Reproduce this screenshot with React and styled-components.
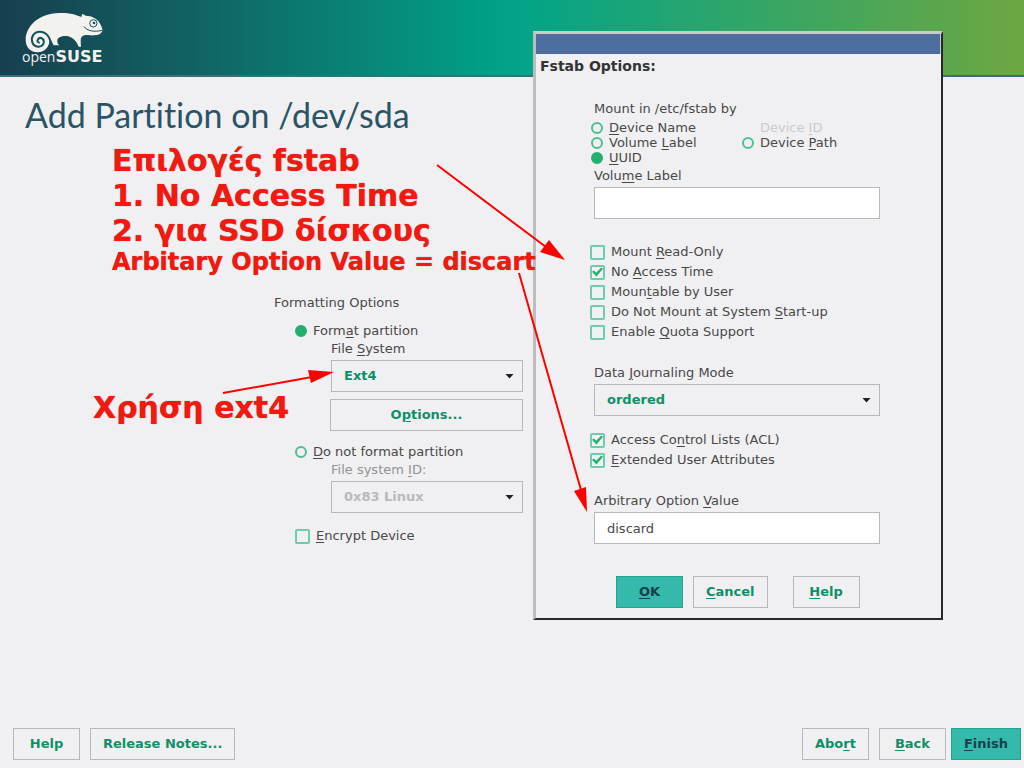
import React from 'react';
import styled, { createGlobalStyle, css } from 'styled-components';

const colors = {
  page: '#f0f0f2',
  text: '#484848',
  disabled: '#b9b9bb',
  muted: '#929294',
  green: '#0f8f68',
  ring: '#4cc08f',
  tick: '#22b06c',
  line: '#b8b8ba',
  primary: '#35b9ab',
  dark: '#173f4f',
  note: '#f5180f',
};

const GlobalStyle = createGlobalStyle`
  *, *::before, *::after { box-sizing: border-box; }
  body {
    margin: 0;
    background: ${colors.page};
    color: ${colors.text};
    font-family: "DejaVu Sans", sans-serif;
    font-size: 13px;
    line-height: 18px;
  }
  button, input, select { font: inherit; margin: 0; }
  u { text-underline-offset: 2px; }
`;

const Page = styled.div`
  position: relative;
  min-height: 100vh;
  display: flex;
  flex-direction: column;
`;

const Header = styled.header`
  height: 77px;
  padding: 12px 22px;
  border-bottom: 2px solid #3b6f78;
  background: linear-gradient(90deg, #173f4f 0%, #106563 20%, #00a489 50%, #6da741 100%);
`;

const Logo = styled.div`
  display: flex;
  flex-direction: column;
  color: #f2f2ee;
  width: 82px;
`;

const LogoName = styled.div`
  font-family: "Open Sans", sans-serif;
  font-size: 14px;
  line-height: 14px;
  margin-top: -3px;

  b {
    font-family: "DejaVu Sans", sans-serif;
    font-size: 16px;
  }
`;

const Title = styled.h1`
  margin: 0;
  padding: 18px 25px 0;
  color: #2b5366;
  font-family: Lato, sans-serif;
  font-weight: 400;
  font-size: 34px;
  line-height: 40px;
  font-variant-ligatures: none;
`;

const FormatForm = styled.form`
  flex: 1;
  display: flex;
  flex-direction: column;
  align-items: flex-start;
  width: 523px;
  padding: 159px 0 0 274px;
`;

const Group = styled.fieldset`
  border: 0;
  margin: 0;
  padding: 0;
  min-width: 0;
  width: 100%;
`;

const Legend = styled.legend`
  padding: 0;
  margin-bottom: ${p => p.$gap || 0}px;
`;

const Indent = styled.div`
  display: flex;
  flex-direction: column;
  gap: ${p => p.$gap || 0}px;
  padding-left: ${p => p.$left || 0}px;
  margin-bottom: ${p => p.$after || 0}px;
`;

const Choice = styled.label`
  display: flex;
  align-items: center;
  gap: 6px;
  line-height: ${p => p.$line || 18}px;
  color: ${p => (p.$off ? '#c9c9cb' : 'inherit')};
`;

const Radio = styled.input.attrs({ type: 'radio' })`
  appearance: none;
  width: 12px;
  height: 12px;
  border: 2px solid ${colors.ring};
  border-radius: 50%;

  &:checked {
    border-color: ${colors.tick};
    background: ${colors.tick};
  }
  &:disabled { visibility: hidden; }
`;

const Check = styled.input.attrs({ type: 'checkbox' })`
  appearance: none;
  display: grid;
  place-items: center;
  width: 15px;
  height: 15px;
  border: 2px solid #6fcbab;
  border-radius: 2px;

  &:checked::before {
    content: "";
    width: 11px;
    height: 9px;
    background: ${colors.tick};
    clip-path: polygon(0 48%, 18% 32%, 38% 58%, 84% 0, 100% 14%, 40% 100%);
  }
`;

const FieldLabel = styled.label`
  display: block;
  color: ${p => (p.$off ? colors.muted : 'inherit')};
`;

const field = css`
  width: 100%;
  height: 32px;
  padding: 0 12px;
  border: 1px solid ${colors.line};
  border-radius: 0;
  outline: none;
`;

const TextBox = styled.input.attrs({ type: 'text' })`
  ${field}
  background: #fff;
  color: ${colors.text};
`;

const SelectBox = styled.div`
  display: grid;
  align-items: center;

  &::after {
    content: "";
    grid-area: 1 / 1;
    justify-self: end;
    width: 9px;
    height: 5px;
    margin-right: 9px;
    background: #222;
    clip-path: polygon(0 0, 100% 0, 50% 100%);
    pointer-events: none;
  }

  select {
    ${field}
    grid-area: 1 / 1;
    appearance: none;
    background: transparent;
    color: ${colors.green};
    font-weight: 700;
    opacity: 1;
  }
  select:disabled { color: ${colors.disabled}; }
`;

const Button = styled.button`
  height: 32px;
  padding: 0 12px;
  min-width: 67px;
  border: 1px solid ${p => (p.$primary ? '#1fa58e' : colors.line)};
  background: ${p => (p.$primary ? colors.primary : 'transparent')};
  color: ${p => (p.$primary ? colors.dark : colors.green)};
  font-weight: 700;
`;

const Footer = styled.footer`
  display: flex;
  gap: 10px;
  padding: 0 3px 8px 13px;
`;

const Right = styled.div`
  display: flex;
  gap: ${p => p.$gap || 10}px;
  margin-left: auto;
`;

const Dialog = styled.section`
  position: absolute;
  left: 533px;
  top: 31px;
  width: 410px;
  background: ${colors.page};
  border: 3px solid;
  border-color: #c9cbc9 #26282c #26282c #bdbdbf;
  border-width: 3px 2px 2px 3px;
`;

const TitleBar = styled.div`
  height: 20px;
  background: #4d6d9f;
  border-right: 1px solid #c9cbc9;
`;

const DialogTitle = styled.h2`
  margin: 0;
  padding: 2px 4px 0;
  font-size: 14px;
  line-height: 20px;
  color: #333;
`;

const DialogForm = styled.form`
  padding: 24px 61px 10px 58px;
`;

const RadioGrid = styled.div`
  display: grid;
  grid-template-columns: 151px 1fr;
  margin: 0 0 2px -3px;
`;

const Checks = styled.div`
  display: flex;
  flex-direction: column;
  gap: 2px;
  margin: ${p => p.$top}px 0 23px -4px;
`;

const DialogButtons = styled.div`
  display: flex;
  gap: 10px;
  padding: 32px 0 0 22px;

  button:last-child { margin-left: 15px; }
`;

const Note = styled.p`
  position: absolute;
  left: ${p => p.$x}px;
  top: ${p => p.$y}px;
  margin: 0;
  white-space: nowrap;
  font-weight: 700;
  font-size: 30px;
  line-height: 35px;
  color: ${colors.note};
  text-shadow: 0 0 1px rgba(40, 0, 0, 0.6);

  small {
    display: block;
    font-size: 24px;
    line-height: 28px;
  }
`;

const Arrows = styled.svg`
  position: absolute;
  left: 0;
  top: 0;
  pointer-events: none;
`;

const checks = [
  ['Mount ', 'R', 'ead-Only', false],
  ['No ', 'A', 'ccess Time', true],
  ['Moun', 't', 'able by User', false],
  ['Do Not Mount at System ', 'S', 'tart-up', false],
  ['Enable ', 'Q', 'uota Support', false],
];

const attributes = [
  ['Access Co', 'n', 'trol Lists (ACL)', true],
  ['', 'E', 'xtended User Attributes', true],
];

function CheckList({ items, top }) {
  return (
    <Checks $top={top}>
      {items.map(([before, key, after, on]) => (
        <Choice key={before + key + after}>
          <Check defaultChecked={on} />
          <span>{before}<u>{key}</u>{after}</span>
        </Choice>
      ))}
    </Checks>
  );
}

function Geeko() {
  return (
    <svg width="82" height="41" viewBox="6 11 246 123" fill="#f2f2ee" aria-hidden="true">
      <path d="M17 92 C18 56 54 15 118 14 C148 13 166 18 184 26 L187 16 L197 22 C216 22 232 32 239 44 C244 53 248 60 247 68 C244 76 236 81 222 81 C206 82 196 78 189 82 C179 87 183 100 183 115 L176 115 C170 99 160 89 145 84 C130 81 112 86 112 97 C112 104 113 107 119 111 L101 111 C96 104 95 94 89 90 C90 116 73 133 52 132 C30 131 16 115 17 92 Z" />
      <path d="M93 120 C95 90 80 70 59 70 C41 70 32 87 37 102 C42 118 66 120 71 104 C74 91 60 84 54 93 C50 99 54 104 59 102" fill="none" stroke="#155159" strokeWidth="6" />
      <circle cx="220" cy="45" r="11" fill="none" stroke="#155159" strokeWidth="3" />
      <circle cx="222" cy="44" r="4" fill="#155159" />
      <path d="M192 54 C200 68 224 72 246 66" fill="none" stroke="#155159" strokeWidth="3" />
    </svg>
  );
}

function FstabDialog() {
  return (
    <Dialog role="dialog" aria-labelledby="fstab-title">
      <TitleBar />
      <DialogTitle id="fstab-title">Fstab Options:</DialogTitle>
      <DialogForm onSubmit={e => e.preventDefault()}>
        <Group>
          <Legend $gap={2}>Mount in /etc/fstab by</Legend>
          <RadioGrid>
            <Choice $line={15}><Radio name="mountby" /><span><u>D</u>evice Name</span></Choice>
            <Choice $line={15} $off><Radio name="mountby" disabled /><span>Device <u>I</u>D</span></Choice>
            <Choice $line={15}><Radio name="mountby" /><span>Volume <u>L</u>abel</span></Choice>
            <Choice $line={15}><Radio name="mountby" /><span>Device <u>P</u>ath</span></Choice>
            <Choice $line={15}><Radio name="mountby" defaultChecked /><span><u>U</u>UID</span></Choice>
          </RadioGrid>
        </Group>
        <Indent $gap={2}>
          <FieldLabel htmlFor="volume">Volu<u>m</u>e Label</FieldLabel>
          <TextBox id="volume" />
        </Indent>
        <CheckList items={checks} top={24} />
        <Indent $gap={2}>
          <FieldLabel htmlFor="journal">Data <u>J</u>ournaling Mode</FieldLabel>
          <SelectBox>
            <select id="journal"><option>ordered</option></select>
          </SelectBox>
        </Indent>
        <CheckList items={attributes} top={15} />
        <Indent $gap={2}>
          <FieldLabel htmlFor="arbitrary">Arbitrary Option <u>V</u>alue</FieldLabel>
          <TextBox id="arbitrary" defaultValue="discard" />
        </Indent>
        <DialogButtons>
          <Button $primary><u>O</u>K</Button>
          <Button><u>C</u>ancel</Button>
          <Button><u>H</u>elp</Button>
        </DialogButtons>
      </DialogForm>
    </Dialog>
  );
}

function App() {
  return (
    <Page>
      <GlobalStyle />
      <Header>
        <Logo>
          <Geeko />
          <LogoName>open<b>SUSE</b></LogoName>
        </Logo>
      </Header>
      <Title>Add Partition on /dev/sda</Title>
      <FormatForm onSubmit={e => e.preventDefault()}>
        <Group>
          <Legend $gap={10}>Formatting Options</Legend>
          <Indent $left={21}>
            <Choice><Radio name="format" defaultChecked /><span>Form<u>a</u>t partition</span></Choice>
          </Indent>
          <Indent $left={57} $gap={2} $after={7}>
            <FieldLabel htmlFor="fs">File <u>S</u>ystem</FieldLabel>
            <SelectBox>
              <select id="fs"><option>Ext4</option></select>
            </SelectBox>
          </Indent>
          <Indent $left={56} $after={12}>
            <Button>O<u>p</u>tions...</Button>
          </Indent>
          <Indent $left={21}>
            <Choice><Radio name="format" /><span><u>D</u>o not format partition</span></Choice>
          </Indent>
          <Indent $left={57} $gap={2} $after={14}>
            <FieldLabel htmlFor="fsid" $off>File system <u>I</u>D:</FieldLabel>
            <SelectBox>
              <select id="fsid" disabled><option>0x83 Linux</option></select>
            </SelectBox>
          </Indent>
          <Indent $left={21}>
            <Choice><Check /><span><u>E</u>ncrypt Device</span></Choice>
          </Indent>
        </Group>
      </FormatForm>
      <Footer>
        <Button>Help</Button>
        <Button>Release Notes...</Button>
        <Right>
          <Button>Abo<u>r</u>t</Button>
          <Right $gap={5}>
            <Button><u>B</u>ack</Button>
            <Button $primary><u>F</u>inish</Button>
          </Right>
        </Right>
      </Footer>

      <FstabDialog />

      <Note $x={112} $y={143}>
        Επιλογές fstab<br />
        1. No Access Time<br />
        2. για SSD δίσκους
        <small>Arbitary Option Value = discart</small>
      </Note>
      <Note $x={93} $y={390}>Χρήση ext4</Note>
      <Arrows width="600" height="520" fill="#f00" stroke="#f00" strokeWidth="2" aria-hidden="true">
        <path d="M437 165 L550 250 M519 273 L581 490 M223 393 L312 377" />
        <path stroke="none" d="M565 260 L549 240 L540 252 Z M587 512 L586 487 L574 491 Z M334 372 L308 370 L311 383 Z" />
      </Arrows>
    </Page>
  );
}

export default App;
